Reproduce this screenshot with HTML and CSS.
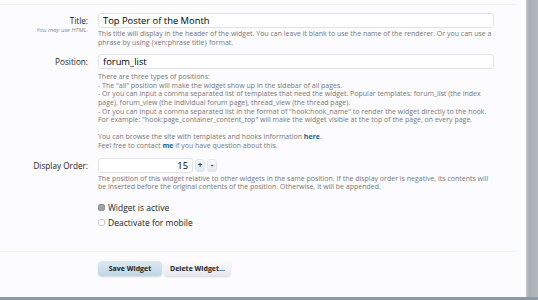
FILE: index.html
```html
<!DOCTYPE html>
<html lang="en">
<head>
    <meta charset="UTF-8">
    <title>Edit Widget</title>
    <link rel="stylesheet" href="styles.css">
</head>
<body>
    <div class="page">
        <div class="panel">
            <form class="widget-form">
                <div class="form-row">
                    <div class="row-label">
                        <label for="title">Title:</label>
                        <span class="hint">You may use HTML.</span>
                    </div>
                    <div class="row-control">
                        <input type="text" id="title" class="text-input" value="Top Poster of the Month">
                        <p class="explain">This title will display in the header of the widget. You can leave it blank to use the name of the renderer. Or you can use a phrase by using {xen:phrase title} format.</p>
                    </div>
                </div>

                <div class="form-row">
                    <div class="row-label">
                        <label for="position">Position:</label>
                    </div>
                    <div class="row-control">
                        <input type="text" id="position" class="text-input" value="forum_list">
                        <p class="explain explain-position">There are three types of positions:<br>
                            - The "all" position will make the widget show up in the sidebar of all pages.<br>
                            - Or you can input a comma separated list of templates that need the widget. Popular templates: forum_list (the index page), forum_view (the individual forum page), thread_view (the thread page).<br>
                            - Or you can input a comma separated list in the format of "hook:hook_name" to render the widget directly to the hook. For example: "hook:page_container_content_top" will make the widget visible at the top of the page, on every page.<br>
                            <br>
                            You can browse the site with templates and hooks information <a href="#">here</a>.<br>
                            Feel free to contact <a href="#">me</a> if you have question about this.</p>
                    </div>
                </div>

                <div class="form-row">
                    <div class="row-label">
                        <label for="order">Display Order:</label>
                    </div>
                    <div class="row-control">
                        <div class="spin-box">
                            <input type="text" id="order" class="text-input number-input" value="15">
                            <button type="button" class="spin-button">+</button>
                            <button type="button" class="spin-button">-</button>
                        </div>
                        <p class="explain">The position of this widget relative to other widgets in the same position. If the display order is negative, its contents will be inserted before the original contents of the position. Otherwise, it will be appended.</p>
                    </div>
                </div>

                <div class="form-row">
                    <div class="row-label"></div>
                    <div class="row-control checks">
                        <label class="check"><span class="box checked"></span>Widget is active</label>
                        <label class="check"><span class="box"></span>Deactivate for mobile</label>
                    </div>
                </div>

                <div class="submit-unit">
                    <button type="button" class="button primary">Save Widget</button>
                    <button type="button" class="button">Delete Widget...</button>
                </div>
            </form>
        </div>
        <div class="side-shadow"></div>
    </div>
    <div class="bottom-bar"></div>
</body>
</html>
```

FILE: styles.css
```css
body {
    margin: 0;
    padding: 0;
    font-family: "Open Sans", "DejaVu Sans", sans-serif;
    background: #fcfcfe;
    color: #222;
}
.page {
    display: flex;
    height: 297px;
    overflow: hidden;
}
.panel {
    width: 526px;
    background: #fcfcfe;
}
.side-shadow {
    flex-grow: 1;
    background: linear-gradient(to right, #c3c7cc 0, #a9afb5 3px, #b3b8be 100%);
}
.bottom-bar {
    height: 3px;
    background: #8d99a4;
}
.widget-form {
    margin: 4px 10px 0 0;
    border-top: 1px solid #edf1f5;
    padding-top: 8px;
}
.form-row {
    display: grid;
    grid-template-columns: 88px 396px;
    column-gap: 10px;
    margin-bottom: 7px;
}
.row-label {
    text-align: right;
    padding-top: 2px;
}
.row-label label {
    display: block;
    font-size: 8.2px;
    line-height: 11px;
    color: #222;
}
.hint {
    display: block;
    font-size: 6px;
    line-height: 8px;
    font-style: italic;
    color: #8a8a8a;
}
.text-input {
    display: block;
    box-sizing: border-box;
    width: 100%;
    height: 15px;
    margin: 0;
    padding: 0 4px;
    border: 1px solid #e0e3e7;
    border-radius: 3px;
    background: #fff;
    font-family: inherit;
    font-size: 9.4px;
    color: #000;
}
.explain {
    margin: 2px 0 0;
    font-size: 7px;
    line-height: 8.6px;
    color: #777;
}
.explain a {
    color: #176093;
    text-decoration: none;
    font-weight: bold;
}
.explain-position {
    margin-top: 4px;
}
.spin-box {
    display: flex;
    gap: 2px;
    align-items: center;
}
.number-input {
    width: 95px;
    text-align: right;
}
.spin-button {
    width: 10px;
    height: 13px;
    padding: 0;
    border: 1px solid #e1e6eb;
    border-radius: 3px;
    background: linear-gradient(#f6f8fa, #e2e8ee);
    font-family: inherit;
    font-size: 8px;
    font-weight: bold;
    line-height: 10px;
    color: #333;
}
.checks {
    padding-top: 1px;
}
.check {
    display: flex;
    align-items: center;
    gap: 3px;
    font-size: 8.5px;
    line-height: 15px;
    color: #222;
}
.box {
    box-sizing: border-box;
    width: 7px;
    height: 7px;
    border: 1px solid #c8ccd0;
    border-radius: 2px;
    background: #fff;
}
.box.checked {
    background: #9ea3a8;
    border-color: #8d9298;
}
.submit-unit {
    margin-top: 21px;
    border-top: 1px solid #edf4f5;
    padding: 9px 0 0 98px;
    display: flex;
    gap: 2px;
}
.button {
    height: 15px;
    padding: 0 6px;
    border: none;
    border-radius: 4px;
    background: linear-gradient(#fbfbfd, #e7e8ee);
    box-shadow: 0 1px 2px rgba(0, 0, 0, 0.15);
    font-family: inherit;
    font-size: 7px;
    font-weight: bold;
    color: #222;
}
.button.primary {
    width: 64px;
    background: linear-gradient(#dde9f2, #bfd6e6);
}
```
